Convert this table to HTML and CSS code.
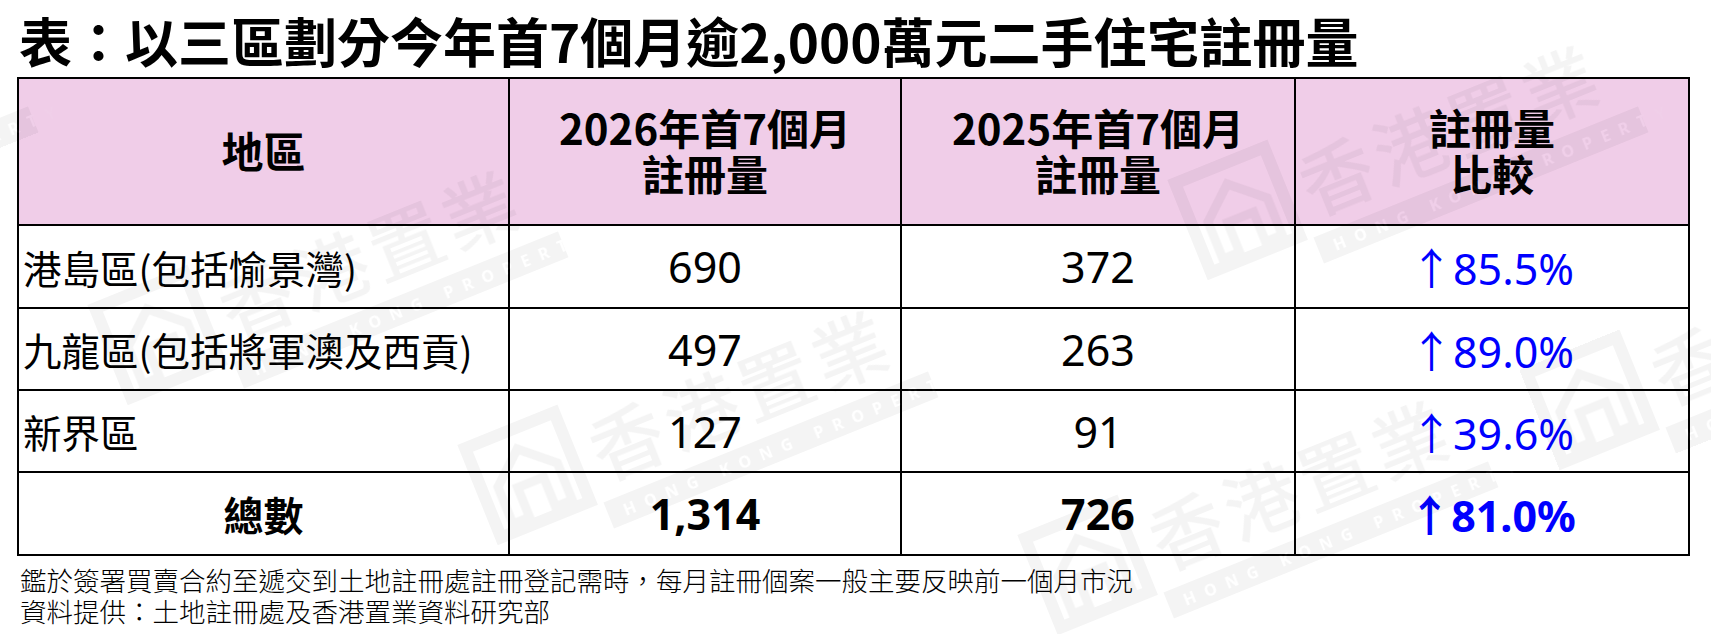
FILE: index.html
```html
<!DOCTYPE html>
<html lang="zh-Hant">
<head>
<meta charset="utf-8">
<title>二手住宅註冊量</title>
<link rel="stylesheet" href="styles.css">
</head>
<body>
<div class="page">
  <h1 class="title">表：以三區劃分今年首7個月逾2,000萬元二手住宅註冊量</h1>
  <div class="grid">
    <div class="cell head">地區</div>
    <div class="cell head"><span class="line">2026年首7個月</span><span class="line">註冊量</span></div>
    <div class="cell head"><span class="line">2025年首7個月</span><span class="line">註冊量</span></div>
    <div class="cell head"><span class="line">註冊量</span><span class="line">比較</span></div>

    <div class="cell region">港島區(包括愉景灣)</div>
    <div class="cell num">690</div>
    <div class="cell num">372</div>
    <div class="cell pct">↑85.5%</div>

    <div class="cell region">九龍區(包括將軍澳及西貢)</div>
    <div class="cell num">497</div>
    <div class="cell num">263</div>
    <div class="cell pct">↑89.0%</div>

    <div class="cell region">新界區</div>
    <div class="cell num">127</div>
    <div class="cell num">91</div>
    <div class="cell pct">↑39.6%</div>

    <div class="cell total-label">總數</div>
    <div class="cell num total">1,314</div>
    <div class="cell num total">726</div>
    <div class="cell pct total">↑81.0%</div>
  </div>
  <div class="notes">
    <p>鑑於簽署買賣合約至遞交到土地註冊處註冊登記需時，每月註冊個案一般主要反映前一個月市況</p>
    <p>資料提供：土地註冊處及香港置業資料研究部</p>
  </div>

  <svg class="watermark" width="1711" height="634" viewBox="0 0 1711 634" aria-hidden="true">
    <defs>
      <g id="wm">
        <rect x="2" y="-98" width="96" height="96" fill="none" stroke="#000" stroke-width="12"/>
        <path d="M18 -10 L18 -50 L50 -78 L82 -50 L82 -10 L64 -10 L64 -42 L36 -42 L36 -10 Z" fill="none" stroke="#000" stroke-width="9"/>
        <text x="118" y="-16" class="wm-big">香港置業</text>
        <rect x="110" y="4" width="350" height="28" fill="#000"/>
        <text x="126" y="25" class="wm-small">HONG KONG PROPERTY</text>
      </g>
    </defs>
    <g class="wm-layer">
      <use href="#wm" transform="translate(-400 275) rotate(-22)"/>
      <use href="#wm" transform="translate(130 400) rotate(-22)"/>
      <use href="#wm" transform="translate(500 540) rotate(-22)"/>
      <use href="#wm" transform="translate(1210 275) rotate(-22)"/>
      <use href="#wm" transform="translate(1060 630) rotate(-22)"/>
      <use href="#wm" transform="translate(1562 465) rotate(-22)"/>
    </g>
  </svg>
</div>
</body>
</html>
```

FILE: styles.css
```css
* {
  box-sizing: border-box;
}

body {
  margin: 0;
  background: #ffffff;
  color: #000000;
  font-family: "Noto Sans CJK TC", "Noto Sans", sans-serif;
}

.page {
  position: relative;
  width: 1711px;
  height: 634px;
  overflow: hidden;
}

.title {
  margin: 0;
  padding: 8px 0 0 19px;
  height: 77px;
  font-size: 53px;
  line-height: 64px;
  font-weight: 700;
  white-space: nowrap;
}

.grid {
  margin-left: 17px;
  width: 1673px;
  display: grid;
  grid-template-columns: 491px 392px 394px 394px;
  grid-template-rows: 147px 83px 82px 82px 83px;
  border-left: 2px solid #000;
  border-top: 2px solid #000;
}

.cell {
  border-right: 2px solid #000;
  border-bottom: 2px solid #000;
  display: flex;
  align-items: center;
  justify-content: center;
  text-align: center;
  white-space: nowrap;
  background: #ffffff;
}

.head {
  background: #f0cde8;
  flex-direction: column;
  font-size: 42px;
  line-height: 46px;
  font-weight: 700;
  padding-bottom: 4px;
}

.line {
  display: block;
  height: 46px;
}

.region {
  justify-content: flex-start;
  padding-left: 4px;
  font-size: 38.5px;
}

.total-label {
  font-size: 40px;
  font-weight: 700;
}

.num {
  font-family: "Noto Sans", "Noto Sans CJK TC", sans-serif;
  font-size: 43px;
}

.pct {
  font-family: "Noto Sans", "Noto Sans CJK TC", sans-serif;
  font-size: 43px;
  color: #0000ff;
}

.total {
  font-weight: 700;
}

.notes {
  padding: 8px 0 0 20px;
}

.notes p {
  margin: 0;
  font-size: 26.5px;
  line-height: 31px;
  font-weight: 300;
  color: #000;
  white-space: nowrap;
}

.watermark {
  position: absolute;
  left: 0;
  top: 0;
  pointer-events: none;
}

.wm-layer {
  opacity: 0.045;
}

.wm-big {
  font-family: "Noto Sans CJK TC", sans-serif;
  font-size: 74px;
  font-weight: 500;
  letter-spacing: 6px;
  fill: #000;
}

.wm-small {
  font-family: "Noto Sans", sans-serif;
  font-size: 16px;
  font-weight: 700;
  letter-spacing: 10px;
  fill: #fff;
}
```
